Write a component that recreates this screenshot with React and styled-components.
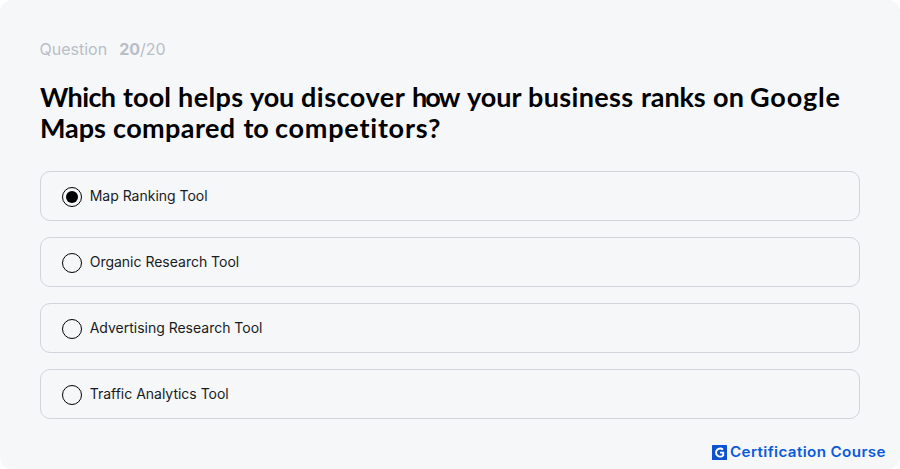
import React from "react";
import styled, { createGlobalStyle } from "styled-components";

const GlobalStyle = createGlobalStyle`
  * { box-sizing: border-box; }
  body { margin: 0; background: #fff; }
`;

const Card = styled.main`
  display: flex;
  flex-direction: column;
  width: 900px;
  height: 469px;
  padding: 39px 40px 0;
  border-radius: 12px;
  background: #f5f7f9;
  font-family: Inter, "Liberation Sans", sans-serif;
`;

const Progress = styled.div`
  display: flex;
  gap: 12px;
  height: 20px;
  margin-left: -0.5px;
  font-size: 16px;
  line-height: 20px;
  color: #b9bec7;
`;

const Title = styled.h1`
  margin: 22px 0 0;
  height: 62px;
  font-family: Lato, sans-serif;
  font-weight: 700;
  font-size: 27px;
  line-height: 31px;
  color: #000;
  white-space: pre;
`;

const TitleLine = styled.span`
  display: flex;
`;

const Word = styled.span`
  flex: 0 0 ${(p) => p.$advance}px;
  min-width: 0;
  letter-spacing: ${(p) => p.$tracking}px;
`;

const Options = styled.div`
  display: flex;
  flex-direction: column;
  gap: 16px;
  margin-top: 28px;
`;

const Option = styled.label`
  display: flex;
  align-items: center;
  gap: 8px;
  height: 50px;
  padding-left: 21px;
  border: 1px solid #d1d4db;
  border-radius: 10px;
`;

const Radio = styled.span`
  display: grid;
  place-items: center;
  width: 20px;
  height: 20px;
  margin-top: 2px;
  border: 1px solid #000;
  border-radius: 50%;
  &::after {
    content: "";
    width: 12px;
    height: 12px;
    border-radius: 50%;
    background: ${(p) => (p.$checked ? "#000" : "transparent")};
  }
`;

const OptionText = styled.span`
  margin-left: -0.3px;
  font-size: 14px;
  line-height: 20px;
  letter-spacing: -0.01px;
  color: #191b23;
`;

const Brand = styled.footer`
  display: flex;
  align-items: center;
  gap: 3px;
  height: 20px;
  margin: 23px -26px 0 672px;
`;

const BrandName = styled.span`
  font-family: Inter, sans-serif;
  font-weight: 600;
  font-size: 14px;
  line-height: 20px;
  letter-spacing: 0.35px;
  color: #0b5ad9;
  white-space: nowrap;
  transform: scaleX(1.085);
  transform-origin: left center;
`;

const titleLines = [
  [
    ["Which", 83, -0.6], ["tool", 55, 0.1], ["helps", 72, 0.4], ["you", 51, -0.1],
    ["discover", 111, 0.5], ["how", 55, -1.9], ["your", 61, 0], ["business", 113, 0.35],
    ["ranks", 72, -0.1], ["on", 37, 0.2], ["Google", 92, 0.85],
  ],
  [["Maps", 73, -0.1], ["compared", 130.5, 0.4], ["to", 31.5, -0.3], ["competitors?", 168, 0.78]],
];

const answers = ["Map Ranking Tool", "Organic Research Tool", "Advertising Research Tool", "Traffic Analytics Tool"];

const BrandMark = () => (
  <svg width="15" height="15" viewBox="0 0 15 15">
    <rect width="15" height="15" rx="0.6" fill="#0b52d0" />
    <path d="M11 4.6A4.1 4.1 0 1 0 11.2 10.3V7.6H8" fill="none" stroke="#fff" strokeWidth="1.9" />
  </svg>
);

export default function App() {
  return (
    <>
      <GlobalStyle />
      <Card>
        <Progress>
          <span>Question</span>
          <span><b>20</b>/20</span>
        </Progress>
        <Title>
          {titleLines.map((line, i) => (
            <TitleLine key={i}>
              {line.map(([text, advance, tracking]) => (
                <Word key={text} $advance={advance} $tracking={tracking}>{text + " "}</Word>
              ))}
            </TitleLine>
          ))}
        </Title>
        <Options>
          {answers.map((answer, i) => (
            <Option key={answer}>
              <Radio $checked={i === 0} />
              <OptionText>{answer}</OptionText>
            </Option>
          ))}
        </Options>
        <Brand>
          <BrandMark />
          <BrandName>Certification Course</BrandName>
        </Brand>
      </Card>
    </>
  );
}
